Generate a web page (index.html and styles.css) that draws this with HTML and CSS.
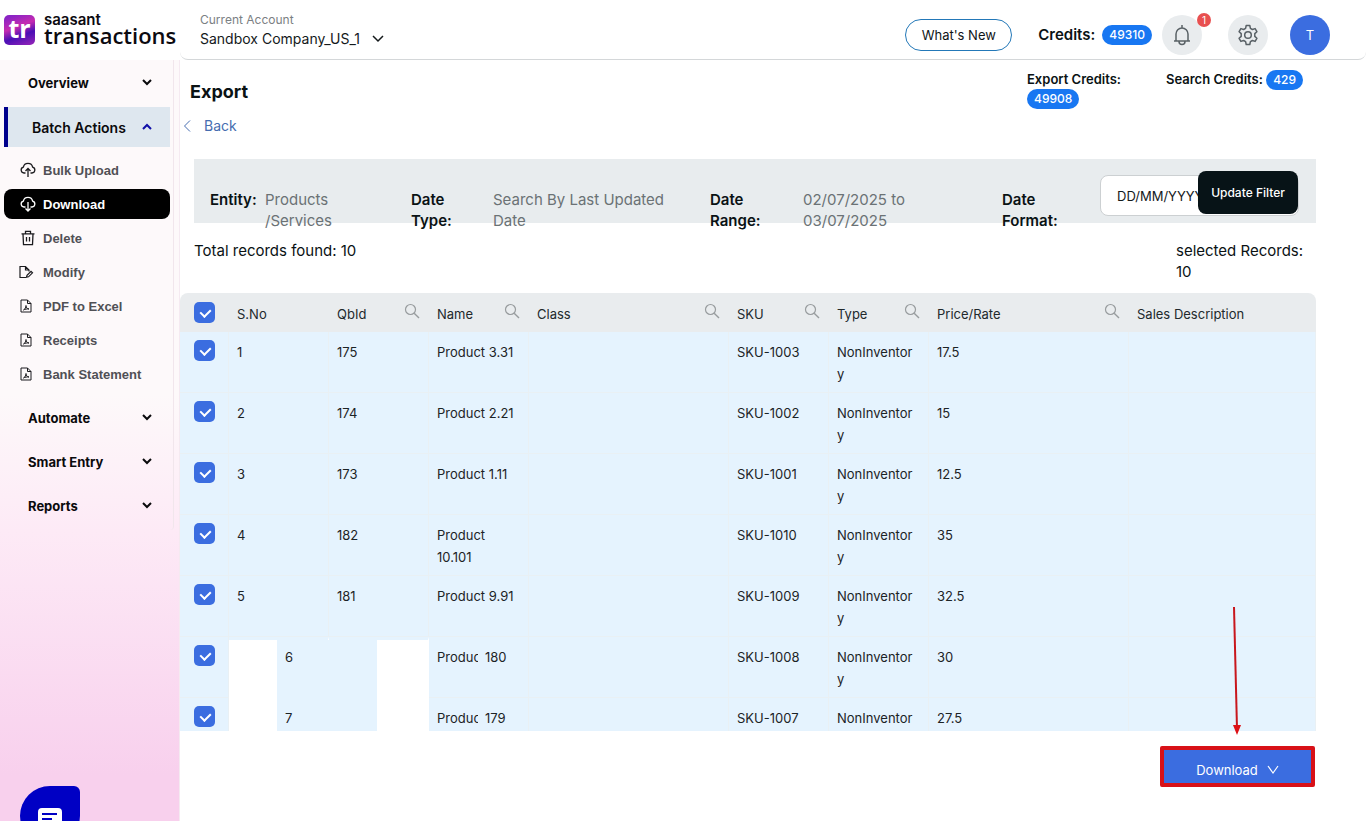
FILE: index.html
```html
<!DOCTYPE html>
<html lang="en">
<head>
  <meta charset="utf-8">
  <title>Export - SaasAnt Transactions</title>
  <link rel="stylesheet" href="styles.css">
</head>
<body>
  <!-- Shared icons -->
  <svg class="sprite" aria-hidden="true">
    <symbol id="chevron" viewBox="0 0 12 12"><path d="M2 4l4 4 4-4" fill="none" stroke="currentColor" stroke-width="2"/></symbol>
    <symbol id="search" viewBox="0 0 16 16"><circle cx="6.5" cy="6.5" r="5" fill="none" stroke="currentColor" stroke-width="1.2"/><path d="M10.2 10.2L15 15" stroke="currentColor" stroke-width="1.4"/></symbol>
    <symbol id="cloud" viewBox="0 0 16 16"><path d="M5.5 11H4a3 3 0 0 1-.6-5.9C3.8 2.8 5.7 1.3 8 1.3s4.2 1.5 4.6 3.8A3 3 0 0 1 12 11h-1.5" fill="none" stroke="currentColor" stroke-width="1.3"/></symbol>
    <symbol id="pdf" viewBox="0 0 16 16"><path d="M3 2h6.5L13 5.5V14H3zM9.5 2v3.5H13M5.5 12c1.7-1 2.5-2.7 2.5-4.5 0 2 1 3.2 3 3.5-2-.2-4 .1-5.5 1z" fill="none" stroke="currentColor" stroke-width="1"/></symbol>
  </svg>

  <header class="topbar">
    <a href="#" class="logo">
      <span class="logo-mark">tr</span>
      <span class="logo-text"><span class="logo-small">saasant</span><span class="logo-big">transactions</span></span>
    </a>
    <div class="topbar-main">
      <div class="account">
        <span class="account-label">Current Account</span>
        <button class="account-button">Sandbox Company_US_1
          <svg width="12" height="8" viewBox="0 0 12 8"><path d="M1 1l5 5 5-5" fill="none" stroke="currentColor" stroke-width="1.5"/></svg>
        </button>
      </div>
      <button class="whats-new">What's New</button>
      <div class="credits">Credits: <span class="pill">49310</span></div>
      <button class="round-button bell" aria-label="Notifications">
        <svg width="20" height="22" viewBox="0 0 20 22" fill="none" stroke="currentColor" stroke-width="1.5"><path d="M2 17h16M4 17V10a6 6 0 0 1 12 0v7M10 1v3M7 17.5a3 3 0 0 0 6 0"/></svg>
        <span class="count">1</span>
      </button>
      <button class="round-button gear" aria-label="Settings">
        <svg width="22" height="22" viewBox="0 0 22 22" fill="none" stroke="currentColor" stroke-width="1.5" stroke-linejoin="round"><path d="M9.2 1.5h3.6l.6 2.8 2 1.2 2.7-.9 1.8 3.1-2.1 1.9v2.8l2.1 1.9-1.8 3.1-2.7-.9-2 1.2-.6 2.8H9.2l-.6-2.8-2-1.2-2.7.9-1.8-3.1 2.1-1.9V9.6L2.1 7.7l1.8-3.1 2.7.9 2-1.2z"/><circle cx="11" cy="11" r="3.3"/></svg>
      </button>
      <button class="round-button avatar">T</button>
    </div>
  </header>

  <div class="layout">
    <nav class="sidebar">
      <div class="menu">
        <a href="#" class="menu-item">Overview <svg><use href="#chevron"/></svg></a>
        <a href="#" class="menu-item open">Batch Actions <svg><use href="#chevron"/></svg></a>
        <div class="submenu">
          <a href="#"><svg viewBox="0 0 16 16"><use href="#cloud"/><path d="M8 15V6.5M5.5 9L8 6.5 10.5 9" fill="none" stroke="currentColor" stroke-width="1.3"/></svg>Bulk Upload</a>
          <a href="#" class="active"><svg viewBox="0 0 16 16"><use href="#cloud"/><path d="M8 6v9M5.5 12.5L8 15l2.5-2.5" fill="none" stroke="currentColor" stroke-width="1.3"/></svg>Download</a>
          <a href="#"><svg viewBox="0 0 16 16"><path d="M1.5 3.8h13M5.5 3.8V1.3h5v2.5M3 3.8l.5 10.9h9L13 3.8M6.5 7v4.5M9.5 7v4.5" fill="none" stroke="currentColor" stroke-width="1.3"/></svg>Delete</a>
          <a href="#" class="shift"><svg viewBox="0 0 16 16"><path d="M9.5 13.5H2v-11h5.5L11 6v1.5M7.5 2.5V6H11M8.500 13.300l.5-2 4-4 1.500 1.500-4 4z" fill="none" stroke="currentColor" stroke-width="1.2"/></svg>Modify</a>
          <a href="#" class="shift"><svg><use href="#pdf"/></svg>PDF to Excel</a>
          <a href="#" class="shift"><svg><use href="#pdf"/></svg>Receipts</a>
          <a href="#" class="shift"><svg><use href="#pdf"/></svg>Bank Statement</a>
        </div>
        <a href="#" class="menu-item">Automate <svg><use href="#chevron"/></svg></a>
        <a href="#" class="menu-item">Smart Entry <svg><use href="#chevron"/></svg></a>
        <a href="#" class="menu-item">Reports <svg><use href="#chevron"/></svg></a>
      </div>
    </nav>

    <main class="content">
      <div class="page-head">
        <div class="page-title">
          <h1>Export</h1>
          <a href="#" class="back"><svg width="8" height="12" viewBox="0 0 8 12"><path d="M7 .5L1.5 6 7 11.5" fill="none" stroke="currentColor"/></svg>Back</a>
        </div>
        <div class="sub-credits export-credits">Export Credits: <span class="pill">49908</span></div>
        <div class="sub-credits">Search Credits: <span class="pill">429</span></div>
      </div>

      <!-- Filter summary -->
      <div class="filter">
        <b>Entity:</b><span>Products /Services</span>
        <b>Date Type:</b><span>Search By Last Updated Date</span>
        <b>Date Range:</b><span>02/07/2025 to 03/07/2025</span>
        <label for="dateFormat">Date Format:</label>
        <div class="filter-controls">
          <select id="dateFormat"><option>DD/MM/YYYY</option></select>
          <button class="update-button">Update Filter</button>
        </div>
      </div>

      <div class="summary">
        <span>Total records found: 10</span>
        <span class="selected">selected Records: 10</span>
      </div>

      <!-- Records -->
      <div class="table-wrap">
        <table>
          <colgroup>
            <col class="col-check"><col class="col-s"><col class="col-s"><col class="col-s"><col class="col-m">
            <col class="col-s"><col class="col-s"><col class="col-m"><col>
          </colgroup>
          <thead>
            <tr>
              <th><input type="checkbox" aria-label="Select all" checked></th>
              <th>S.No</th>
              <th><div>QbId <svg><use href="#search"/></svg></div></th>
              <th><div>Name <svg><use href="#search"/></svg></div></th>
              <th><div>Class <svg><use href="#search"/></svg></div></th>
              <th><div>SKU <svg><use href="#search"/></svg></div></th>
              <th><div>Type <svg><use href="#search"/></svg></div></th>
              <th><div>Price/Rate <svg><use href="#search"/></svg></div></th>
              <th>Sales Description</th>
            </tr>
          </thead>
          <tbody>
            <tr><td><input type="checkbox" aria-label="Select 1" checked></td><td>1</td><td>175</td><td>Product 3.31</td><td></td><td>SKU-1003</td><td class="type">NonInventory</td><td>17.5</td><td></td></tr>
            <tr><td><input type="checkbox" aria-label="Select 2" checked></td><td>2</td><td>174</td><td>Product 2.21</td><td></td><td>SKU-1002</td><td class="type">NonInventory</td><td>15</td><td></td></tr>
            <tr><td><input type="checkbox" aria-label="Select 3" checked></td><td>3</td><td>173</td><td>Product 1.11</td><td></td><td>SKU-1001</td><td class="type">NonInventory</td><td>12.5</td><td></td></tr>
            <tr><td><input type="checkbox" aria-label="Select 4" checked></td><td>4</td><td>182</td><td>Product 10.101</td><td></td><td>SKU-1010</td><td class="type">NonInventory</td><td>35</td><td></td></tr>
            <tr><td><input type="checkbox" aria-label="Select 5" checked></td><td>5</td><td>181</td><td>Product 9.91</td><td></td><td>SKU-1009</td><td class="type">NonInventory</td><td>32.5</td><td></td></tr>
            <tr class="first-blank"><td><input type="checkbox" aria-label="Select 6" checked></td><td class="blank-left">6</td><td class="blank-right"></td><td><div class="cut"><span>Produc</span>180</div></td><td></td><td>SKU-1008</td><td class="type">NonInventory</td><td>30</td><td></td></tr>
            <tr><td><input type="checkbox" aria-label="Select 7" checked></td><td class="blank-left">7</td><td class="blank-right"></td><td><div class="cut"><span>Produc</span>179</div></td><td></td><td>SKU-1007</td><td class="type">NonInventory</td><td>27.5</td><td></td></tr>
          </tbody>
        </table>
      </div>

      <div class="actions">
        <svg class="arrow" width="12" height="130" viewBox="0 0 12 130"><path d="M4 1l3 122" stroke="#c8161d" stroke-width="2"/><path d="M3 119h8l-4 10z" fill="#dd1015"/></svg>
        <button class="download-button">Download
          <svg width="12" height="10" viewBox="0 0 12 10"><path d="M1 1l5 7 5-7" fill="none" stroke="currentColor" stroke-width="1.2"/></svg>
        </button>
      </div>
    </main>
  </div>

  <button class="chat" aria-label="Chat">
    <svg width="24" height="24" viewBox="0 0 24 24"><path d="M4 0h16a4 4 0 0 1 4 4v20l-5-4H4a4 4 0 0 1-4-4V4a4 4 0 0 1 4-4z" fill="#fff"/><path d="M4 6h15M4 11h10" stroke="#0000c4" stroke-width="2"/></svg>
  </button>
</body>
</html>
```
FILE: styles.css
```css
* {
  box-sizing: border-box;
}
body {
  margin: 0;
  height: 100vh;
  display: flex;
  flex-direction: column;
  overflow: hidden;
  background: #fff;
  color: #0a1214;
  font-family: Inter, "Liberation Sans", sans-serif;
  font-size: 14px;
}
a {
  color: inherit;
  text-decoration: none;
}
button {
  font-family: inherit;
  cursor: pointer;
}
.sprite {
  position: absolute;
  width: 0;
  height: 0;
}

/* Top bar */
.topbar {
  display: flex;
  height: 60px;
  flex-shrink: 0;
}
.logo {
  display: flex;
  width: 180px;
  padding: 15px 0 0 4px;
  gap: 9px;
  color: #0c0a10;
}
.logo-mark {
  width: 31px;
  height: 30px;
  border-radius: 5px;
  background: linear-gradient(160deg, #8b24c4 10%, #c62bb0 40%, #4a0fb5 65%, #9a26b8 100%);
  color: #fff;
  font: 700 25px/26px "Open Sans", sans-serif;
  text-align: center;
}
.logo-text {
  display: flex;
  flex-direction: column;
}
.logo-small {
  font: 600 15px/10px Inter, sans-serif;
}
.logo-big {
  font: 600 22px/20px "Open Sans", sans-serif;
}
.topbar-main {
  flex: 1;
  display: flex;
  align-items: center;
  padding: 10px 36px 0 20px;
  border-bottom: 1px solid #d4d7d9;
  border-radius: 0 0 8px 8px;
}
.account {
  flex: 1;
  align-self: flex-start;
  display: flex;
  flex-direction: column;
  align-items: flex-start;
}
.account-label {
  font-size: 12px;
  line-height: 20px;
  color: #7b8083;
}
.account-button {
  display: flex;
  align-items: center;
  gap: 12px;
  padding: 0;
  border: 0;
  background: none;
  color: #14191b;
  font-size: 14px;
  line-height: 18px;
}
.whats-new {
  height: 32px;
  width: 107px;
  margin-right: 26px;
  border: 1px solid #2378b8;
  border-radius: 16px;
  background: #fff;
  color: #101517;
  font-size: 13px;
}
.credits {
  display: flex;
  align-items: center;
  gap: 7px;
  margin-right: 10px;
  font-size: 15px;
  font-weight: 600;
}
.pill {
  display: inline-block;
  padding: 0 7px;
  border-radius: 10px;
  background: #1877f2;
  color: #fff;
  font-size: 12px;
  font-weight: 500;
  line-height: 20px;
}
.round-button {
  position: relative;
  display: flex;
  align-items: center;
  justify-content: center;
  width: 40px;
  height: 40px;
  padding: 0;
  border: 0;
  border-radius: 50%;
  background: #e9ecee;
  color: #596166;
}
.count {
  position: absolute;
  top: -2px;
  right: -9px;
  width: 14px;
  border-radius: 7px;
  background: #e85050;
  color: #fff;
  font-size: 10px;
  line-height: 14px;
}
.gear {
  margin: 0 22px 0 26px;
}
.avatar {
  background: #3b6de0;
  color: #fff;
  font-size: 13px;
}

/* Sidebar */
.layout {
  flex: 1;
  display: flex;
  min-height: 0;
}
.sidebar {
  width: 180px;
  padding-right: 5px;
  background: linear-gradient(#fdf9fa 44%, #fdeaf6 62%, #f8d0ed 94%);
  border-right: 1px solid #f5eaf1;
}
.menu {
  height: 470px;
  padding: 3px 3px 0 4px;
  border-right: 1px solid #f1e6ec;
  border-radius: 0 0 4px 0;
}
.menu-item {
  display: flex;
  align-items: center;
  justify-content: space-between;
  height: 40px;
  margin-bottom: 4px;
  padding: 0 17px 0 24px;
  color: #0a0a0c;
  font-size: 13px;
  font-weight: 700;
}
.menu-item svg {
  width: 12px;
  height: 12px;
  margin-top: -3px;
}
.menu-item.open {
  border-left: 4px solid #00008c;
  background: #dee7ef;
  font-size: 14px;
  font-weight: 600;
}
.menu-item.open svg {
  margin-top: 0;
  color: #1010a8;
  transform: rotate(180deg);
}
.submenu {
  display: flex;
  flex-direction: column;
  gap: 4px;
  margin: 8px 0 9px;
}
.submenu a {
  display: flex;
  align-items: center;
  gap: 7px;
  height: 30px;
  padding-left: 16px;
  border-radius: 8px;
  color: #505055;
  font-family: "Liberation Sans", sans-serif;
  font-size: 13px;
  font-weight: 700;
}
.submenu a svg {
  width: 16px;
  height: 16px;
  color: #1b1b1e;
}
.submenu a.shift {
  padding-left: 14px;
  gap: 9px;
}
.submenu a.active,
.submenu a.active svg {
  background: #000;
  color: #fff;
}

/* Content */
.content {
  flex: 1;
  display: flex;
  flex-direction: column;
  min-width: 0;
  padding-right: 50px;
}
.page-head {
  display: flex;
  height: 99px;
  padding-top: 10px;
}
.page-title {
  flex: 1;
}
h1 {
  margin: 10px 0 13px 10px;
  font-size: 18px;
  line-height: 24px;
  font-weight: 700;
}
.back {
  display: flex;
  align-items: center;
  gap: 13px;
  margin-left: 3px;
  color: #466db0;
  line-height: 18px;
}
.sub-credits {
  width: 150px;
  font-size: 13px;
  line-height: 19px;
  font-weight: 600;
}
.export-credits {
  width: 100px;
  margin-right: 39px;
}
.filter {
  display: grid;
  grid-template-columns: 55px 146fr 82px 217fr 93px 199fr 98px 199px;
  height: 64px;
  margin-left: 14px;
  padding: 30px 17px 0 16px;
  background: #e8ecee;
  font-size: 15px;
  line-height: 21px;
}
.filter b,
.filter label {
  padding-right: 20px;
  font-weight: 600;
}
.filter b:first-child {
  padding-right: 0;
}
.filter span {
  padding-right: 40px;
  color: #6b7275;
}
.filter-controls {
  position: relative;
  align-self: start;
  margin-top: -14px;
}
.filter select {
  display: block;
  appearance: none;
  width: 100%;
  height: 41px;
  padding: 0 16px;
  border: 1px solid #ccd0d2;
  border-radius: 8px;
  background: #fff;
  color: #14191b;
  font-family: inherit;
  font-size: 13px;
}
.update-button {
  position: absolute;
  right: 1px;
  bottom: 2px;
  width: 100px;
  height: 43px;
  padding: 0;
  border: 0;
  border-radius: 8px;
  background: #071317;
  color: #fff;
  font-size: 12px;
  font-weight: 500;
}
.summary {
  display: flex;
  justify-content: space-between;
  height: 70px;
  padding: 17px 0 0 14px;
  font-size: 15px;
  line-height: 21px;
}
.selected {
  width: 140px;
}

/* Table */
.table-wrap {
  flex: 1;
  min-height: 0;
  overflow: hidden;
  border-radius: 8px 8px 0 0;
}
table {
  width: 100%;
  table-layout: fixed;
  border-collapse: separate;
  border-spacing: 0;
}
.col-check {
  width: 49px;
}
.col-s {
  width: 100px;
}
.col-m {
  width: 200px;
}
th {
  height: 39px;
  padding: 3px 8px 0;
  background: #e9ecee;
  color: #22292c;
  font-size: 13px;
  font-weight: 400;
  text-align: left;
}
th div {
  display: flex;
  align-items: center;
  justify-content: space-between;
}
th svg {
  width: 16px;
  height: 16px;
  margin: -6px 1px 0 0;
  color: #989c9e;
}
td {
  height: 61px;
  padding: 9px 8px 7px;
  border-right: 1px solid #e9f0f4;
  border-bottom: 1px solid #e9f0f4;
  background: #e5f3fe;
  color: #1c2326;
  font-size: 13px;
  line-height: 22px;
  vertical-align: top;
}
td.type {
  padding-right: 12px;
  word-break: break-all;
}
th:first-child,
td:first-child {
  padding: 0 0 0 14px;
}
td:first-child {
  padding-top: 8px;
}
input[type="checkbox"] {
  display: block;
  appearance: none;
  width: 21px;
  height: 21px;
  margin: 0;
  border-radius: 5px;
  background: #3b6de0;
}
input[type="checkbox"]:checked::after {
  content: "";
  display: block;
  width: 5px;
  height: 8px;
  margin: 5px 0 0 8px;
  border: solid #fff;
  border-width: 0 2px 2px 0;
  transform: rotate(45deg);
}
.blank-left,
.blank-right {
  border-color: transparent;
}
.blank-left {
  padding-left: 56px;
  background: linear-gradient(90deg, #fff 48px, #e5f3fe 48px) border-box;
}
.blank-right {
  background: linear-gradient(90deg, #e5f3fe 48px, #fff 48px) border-box;
}
.first-blank .blank-left,
.first-blank .blank-right {
  border-top: 3px solid #e5f3fe;
  padding-top: 6px;
}
.cut {
  display: flex;
  gap: 7px;
}
.cut span {
  width: 41px;
  overflow: hidden;
}

/* Bottom actions */
.actions {
  position: relative;
  display: flex;
  justify-content: flex-end;
  height: 90px;
  padding: 15px 1px 0 0;
}
.arrow {
  position: absolute;
  right: 74px;
  bottom: 85px;
}
.download-button {
  display: flex;
  align-items: center;
  justify-content: center;
  gap: 9px;
  width: 155px;
  height: 41px;
  padding: 6px 0 0;
  border: 4px solid #d81118;
  border-radius: 2px;
  background: #3b6de0;
  color: #fff;
  font-size: 13px;
}
.chat {
  position: fixed;
  left: 20px;
  bottom: -25px;
  width: 60px;
  height: 60px;
  padding: 8px 18px 0;
  border: 0;
  border-radius: 30px 6px 30px 30px;
  background: #0000c4;
}
.chat svg {
  display: block;
}
```
